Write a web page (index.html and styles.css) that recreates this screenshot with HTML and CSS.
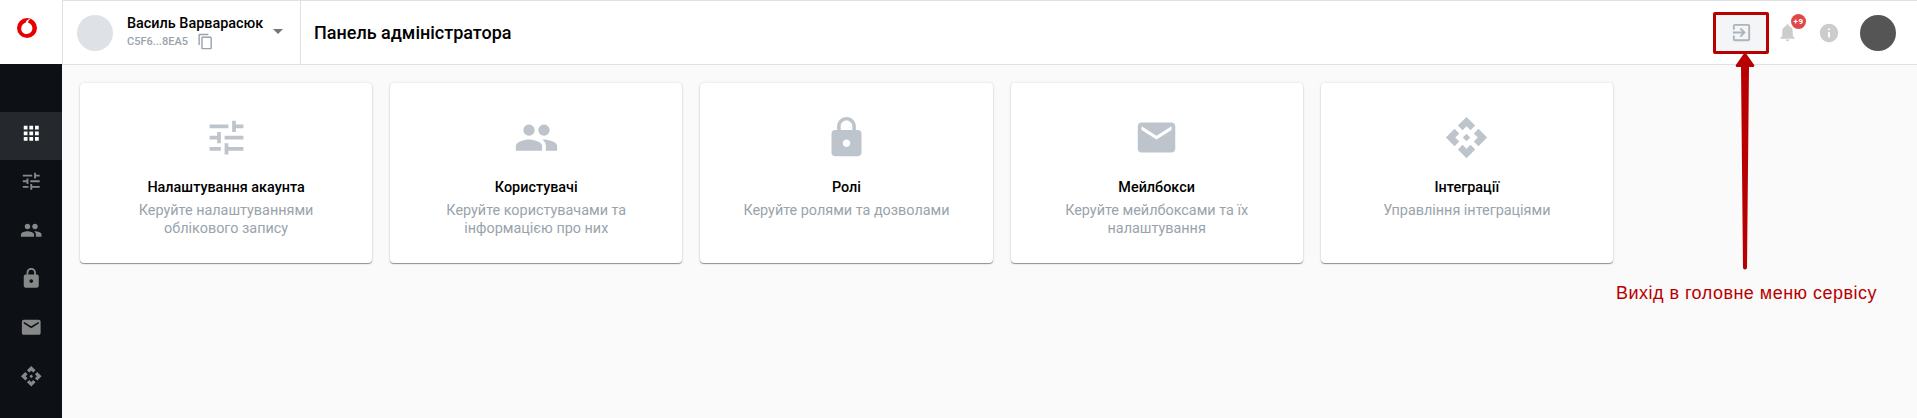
FILE: index.html
```html
<!DOCTYPE html>
<html lang="uk">
<head>
<meta charset="utf-8">
<title>Панель адміністратора</title>
<link rel="stylesheet" href="styles.css">
</head>
<body>
<svg class="sprite" aria-hidden="true">
  <symbol id="tune" viewBox="0 0 24 24"><path d="M3 17v2h6v-2H3zM3 5v2h10V5H3zm10 16v-2h8v-2h-8v-2h-2v6h2zM7 9v2H3v2h4v2h2V9H7zm14 4v-2H11v2h10zm-6-4h2V7h4V5h-4V3h-2v6z"/></symbol>
  <symbol id="people" viewBox="0 0 24 24"><path d="M16 11c1.660 0 2.990-1.340 2.990-3S17.660 5 16 5c-1.660 0-3 1.340-3 3s1.340 3 3 3zm-8 0c1.660 0 2.990-1.340 2.990-3S9.660 5 8 5C6.340 5 5 6.340 5 8s1.340 3 3 3zm0 2c-2.330 0-7 1.170-7 3.500V19h14v-2.500c0-2.330-4.670-3.500-7-3.500zm8 0c-.29 0-.62.02-.97.05 1.160.84 1.970 1.970 1.970 3.450V19h6v-2.500c0-2.330-4.670-3.500-7-3.500z"/></symbol>
  <symbol id="lock" viewBox="0 0 24 24"><path d="M18 8h-1V6c0-2.760-2.240-5-5-5S7 3.240 7 6v2H6c-1.100 0-2 .9-2 2v10c0 1.100.9 2 2 2h12c1.100 0 2-.9 2-2V10c0-1.100-.9-2-2-2zm-6 9c-1.100 0-2-.9-2-2s.9-2 2-2 2 .9 2 2-.9 2-2 2zm3.100-9H8.900V6c0-1.710 1.390-3.100 3.100-3.100 1.710 0 3.100 1.390 3.100 3.100v2z"/></symbol>
  <symbol id="mail" viewBox="0 0 24 24"><path d="M20 4H4c-1.100 0-1.990.9-1.990 2L2 18c0 1.100.9 2 2 2h16c1.100 0 2-.9 2-2V6c0-1.100-.9-2-2-2zm0 4l-8 5-8-5V6l8 5 8-5v2z"/></symbol>
  <symbol id="api" viewBox="0 0 24 24"><path d="M14 12l-2 2-2-2 2-2 2 2zm-2-6l2.120 2.120 2.500-2.500L12 1 7.380 5.620l2.500 2.500L12 6zm-6 6l2.120-2.120-2.500-2.500L1 12l4.620 4.620 2.500-2.500L6 12zm12 0l-2.120 2.120 2.500 2.500L23 12l-4.620-4.620-2.500 2.500L18 12zm-6 6l-2.120-2.120-2.500 2.500L12 23l4.620-4.620-2.500-2.500L12 18z"/></symbol>
  <symbol id="apps" viewBox="0 0 24 24"><path d="M4 8h4V4H4v4zm6 12h4v-4h-4v4zm-6 0h4v-4H4v4zm0-6h4v-4H4v4zm6 0h4v-4h-4v4zm6-10v4h4V4h-4zm-6 4h4V4h-4v4zm6 6h4v-4h-4v4zm0 6h4v-4h-4v4z"/></symbol>
  <symbol id="copy" viewBox="0 0 24 24"><path d="M16 1H4c-1.100 0-2 .9-2 2v14h2V3h12V1zm3 4H8c-1.100 0-2 .9-2 2v14c0 1.100.9 2 2 2h11c1.100 0 2-.9 2-2V7c0-1.100-.9-2-2-2zm0 16H8V7h11v14z"/></symbol>
  <symbol id="exit" viewBox="0 0 24 24"><path d="M10.090 15.590L11.500 17l5-5-5-5-1.410 1.410L12.670 11H3v2h9.670l-2.580 2.590zM19 3H5c-1.110 0-2 .9-2 2v4h2V5h14v14H5v-4H3v4c0 1.100.89 2 2 2h14c1.100 0 2-.9 2-2V5c0-1.100-.9-2-2-2z"/></symbol>
  <symbol id="bell" viewBox="0 0 24 24"><path d="M12 22c1.100 0 2-.9 2-2h-4c0 1.100.89 2 2 2zm6-6v-5c0-3.070-1.640-5.640-4.500-6.320V4c0-.83-.67-1.500-1.500-1.500s-1.500.67-1.500 1.500v.68C7.630 5.360 6 7.920 6 11v5l-2 2v1h16v-1l-2-2z"/></symbol>
  <symbol id="info" viewBox="0 0 24 24"><path d="M12 2C6.480 2 2 6.480 2 12s4.480 10 10 10 10-4.480 10-10S17.520 2 12 2zm1 15h-2v-6h2v6zm0-8h-2V7h2v2z"/></symbol>
</svg>

<div class="app">
  <nav class="sidebar">
    <a class="logo">
      <svg viewBox="0 0 20 20"><circle cx="10" cy="10" r="10" fill="#e60000"/><path fill="#fff" d="M12.900 1.100C10.600 1.500 9.100 3 8.700 4.400 6.200 5.200 4.200 7.600 4.200 10.700c0 3.100 2.500 5.300 5.500 5.300 3.300 0 5.700-2.500 5.700-5.700 0-3-1.700-5-4.300-5.600 0-1.500.7-2.800 1.900-3.300z"/></svg>
    </a>
    <div class="menu">
      <a class="item active"><svg><use href="#apps"/></svg></a>
      <a class="item"><svg><use href="#tune"/></svg></a>
      <a class="item"><svg><use href="#people"/></svg></a>
      <a class="item"><svg><use href="#lock"/></svg></a>
      <a class="item"><svg><use href="#mail"/></svg></a>
      <a class="item"><svg><use href="#api"/></svg></a>
    </div>
  </nav>

  <div class="main">
    <header class="topbar">
      <div class="account">
        <span class="avatar"></span>
        <div class="who">
          <div class="name">Василь Варварасюк</div>
          <div class="code"><span>C5F6...8EA5</span><svg><use href="#copy"/></svg></div>
        </div>
        <span class="caret"></span>
      </div>
      <h1 class="title">Панель адміністратора</h1>
      <div class="actions">
        <div class="exit">
          <svg class="exit-icon"><use href="#exit"/></svg>
          <svg class="arrow" viewBox="0 0 22 220"><path d="M11 1L1.500 14.500l1 1.500H7l2 200.500a1.900 1.900 0 0 0 4 0L15 16h4.500l1-1.500z"/></svg>
          <span class="note">Вихід в головне меню сервісу</span>
        </div>
        <div class="bell"><svg><use href="#bell"/></svg><span class="badge">+9</span></div>
        <svg class="info"><use href="#info"/></svg>
        <span class="user"></span>
      </div>
    </header>

    <main class="cards">
      <section class="card"><svg><use href="#tune"/></svg><h2>Налаштування акаунта</h2><p>Керуйте налаштуваннями облікового запису</p></section>
      <section class="card"><svg><use href="#people"/></svg><h2>Користувачі</h2><p>Керуйте користувачами та інформацією про них</p></section>
      <section class="card"><svg><use href="#lock"/></svg><h2>Ролі</h2><p>Керуйте ролями та дозволами</p></section>
      <section class="card"><svg><use href="#mail"/></svg><h2>Мейлбокси</h2><p>Керуйте мейлбоксами та їх налаштування</p></section>
      <section class="card"><svg><use href="#api"/></svg><h2>Інтеграції</h2><p>Управління інтеграціями</p></section>
    </main>
  </div>
</div>
</body>
</html>
```
FILE: styles.css
```css
* { box-sizing: border-box; }

body {
  margin: 0;
  background: #fafafa;
  color: #000;
  font-family: Roboto, sans-serif;
  overflow: hidden;
}

svg { display: block; fill: currentColor; flex: none; }
.sprite { position: absolute; width: 0; height: 0; }

.app { display: flex; height: 418px; }

.sidebar {
  display: flex;
  flex-direction: column;
  width: 62px;
  background: #0d1014;
}

.logo { height: 64px; padding: 18px 0 0 17px; background: #fff; }
.logo svg { width: 20px; height: 20px; }

.menu { display: flex; flex-direction: column; gap: 0.6px; padding-top: 48px; }
.item {
  display: flex;
  justify-content: center;
  height: 48px;
  padding-top: 9.700px;
  color: #86888a;
}
.item svg { width: 22.500px; height: 22.500px; }
.item.active { background: #25282c; color: #fff; }

.main { flex: 1; min-width: 0; }

.topbar {
  display: flex;
  height: 65px;
  background: #fff;
  border: 1px solid #dee2e6;
  border-right: 0;
}

.account {
  display: flex;
  align-items: center;
  width: 238px;
  padding-left: 14px;
  border-right: 1px solid #dee2e6;
}
.avatar { width: 36px; height: 36px; border-radius: 50%; background: #dee2e6; }
.who { margin-left: 14px; width: 137px; }
.name { font-size: 14.400px; font-weight: 500; line-height: 18px; white-space: nowrap; }
.code {
  display: flex;
  align-items: center;
  gap: 9px;
  height: 18px;
  color: #99a3ac;
  font-size: 11px;
  font-weight: 500;
}
.code svg { width: 17px; height: 17px; }
.caret {
  margin: 0 0 2px 9px;
  border: 5px solid transparent;
  border-top-color: #757575;
  border-bottom: 0;
}

.title { margin: 0 0 0 13px; font-size: 18px; font-weight: 500; line-height: 64px; }

.actions { display: flex; align-items: center; margin-left: auto; padding-right: 21px; }

.exit {
  position: relative;
  display: flex;
  align-items: center;
  justify-content: center;
  width: 56px;
  height: 42px;
  border: 3px solid #b80000;
  border-radius: 2px;
  background: #f3f5f7;
}
.exit-icon { width: 23px; height: 23px; color: #acb4bc; }
.arrow { position: absolute; left: 18px; top: 36px; width: 22px; height: 220px; color: #b80000; z-index: 2; }
.note {
  position: absolute;
  left: -100px;
  top: 266px;
  color: #b80000;
  font-family: "Liberation Sans", Arial, sans-serif;
  font-size: 18px;
  line-height: 24px;
  letter-spacing: 0.480px;
  white-space: nowrap;
}

.bell { position: relative; margin-left: 8px; color: #ccc; }
.bell svg { width: 21px; height: 21px; }
.badge {
  position: absolute;
  left: 14px;
  top: -8px;
  width: 15px;
  height: 15px;
  border-radius: 50%;
  background: #e04848;
  color: #fff;
  font-size: 8px;
  font-weight: 700;
  line-height: 15px;
  letter-spacing: 0.500px;
  text-align: center;
}
.info { width: 22px; height: 22px; margin-left: 20px; color: #ccc; }
.user { width: 36px; height: 36px; margin-left: 20px; border-radius: 50%; background: #555; }

.cards {
  display: grid;
  grid-template-columns: repeat(5, 292.200px);
  gap: 18px;
  padding: 18px;
}
.card {
  display: flex;
  flex-direction: column;
  align-items: center;
  height: 180px;
  padding: 32px 40px 0;
  border-radius: 4px;
  background: #fff;
  box-shadow: 0 1px 1px rgba(0, 0, 0, 0.4), 0 0 3px rgba(0, 0, 0, 0.12);
  color: #bdc4cc;
  text-align: center;
}
.card svg { width: 45px; height: 45px; }
.card h2 { margin: 19px 0 0; color: #000; font-size: 14.400px; font-weight: 500; line-height: 18px; }
.card p { margin: 5px 0 0; color: #99a3ac; font-size: 14.400px; line-height: 18px; }
```
